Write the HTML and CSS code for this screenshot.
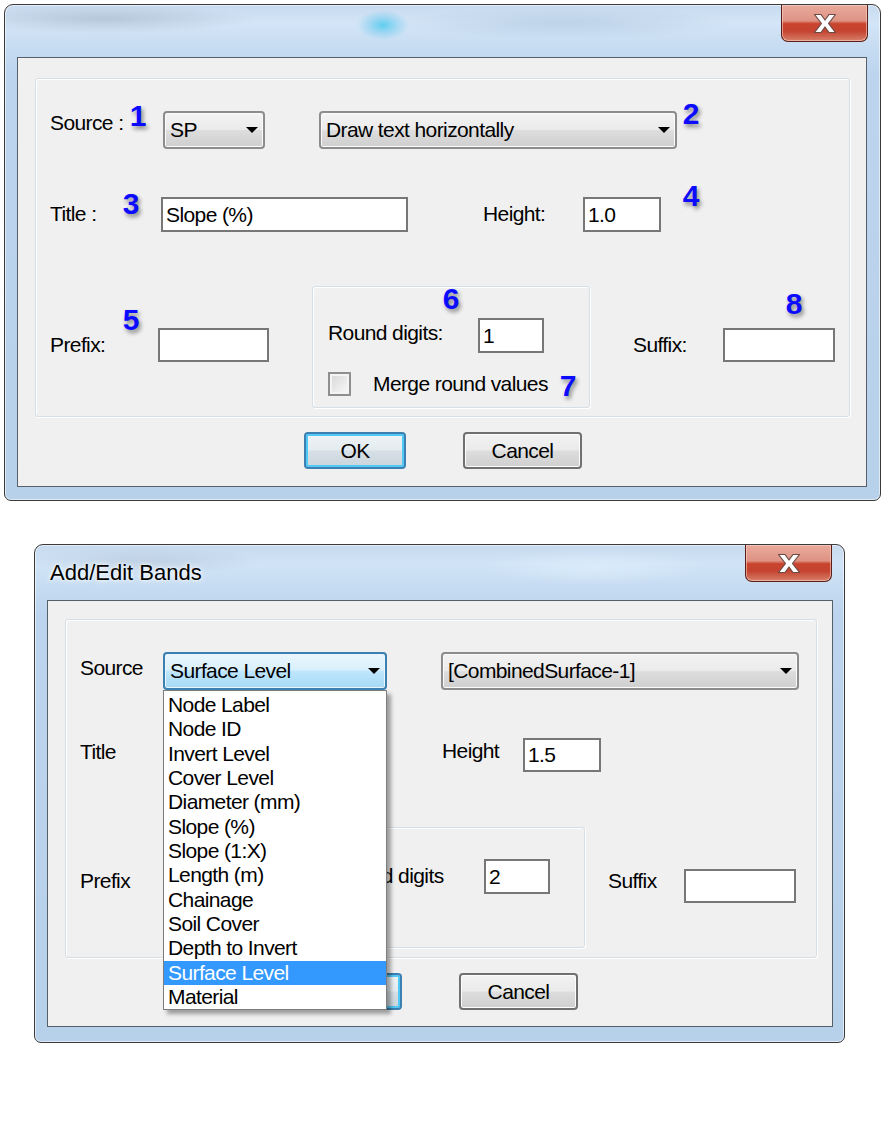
FILE: index.html
```html
<!DOCTYPE html>
<html>
<head>
<meta charset="utf-8">
<title>Band dialogs</title>
<link rel="stylesheet" href="styles.css">
</head>
<body>

<div class="window win-a">
  <div class="titlebar">
    <span class="title"></span>
    <div class="close">
      <svg width="24" height="21" viewBox="0 0 24 21"><polygon points="1.5,1.5 8,1.5 12,7 16,1.5 22.5,1.5 15.5,10.5 22.5,19.5 16,19.5 12,14 8,19.5 1.5,19.5 8.5,10.5" fill="#ffffff" stroke="#6b4a45" stroke-width="1.2" stroke-linejoin="round"/></svg>
    </div>
  </div>
  <div class="client client-a">
    <div class="group group-a">
      <div class="row r1">
        <span class="lbl a-src">Source :</span>
        <div class="combo c-sp"><span>SP</span><i class="arrow"></i></div>
        <div class="combo c-draw"><span>Draw text horizontally</span><i class="arrow"></i></div>
      </div>
      <div class="row r2">
        <span class="lbl a-title">Title :</span>
        <div class="input a-i-title">Slope (%)</div>
        <span class="lbl a-height">Height:</span>
        <div class="input a-i-height">1.0</div>
      </div>
      <div class="row r3">
        <div class="field f-prefix">
          <span class="lbl a-prefix">Prefix:</span>
          <div class="input i-prefix"></div>
        </div>
        <div class="subgroup sub-a">
          <div class="sub-row">
            <span class="lbl a-round">Round digits:</span>
            <div class="input i-round">1</div>
          </div>
          <div class="sub-row check-row">
            <span class="checkbox"></span>
            <span class="lbl a-merge">Merge round values</span>
          </div>
        </div>
        <div class="field f-suffix-a">
          <span class="lbl a-suffix">Suffix:</span>
          <div class="input i-suffix"></div>
        </div>
      </div>

      <span class="badge b1">1</span>
      <span class="badge b2">2</span>
      <span class="badge b3">3</span>
      <span class="badge b4">4</span>
      <span class="badge b5">5</span>
      <span class="badge b6">6</span>
      <span class="badge b7">7</span>
      <span class="badge b8">8</span>
    </div>
    <div class="buttons">
      <div class="btn btn-ok a-ok">OK</div>
      <div class="btn btn-cancel">Cancel</div>
    </div>
  </div>
</div>

<div class="window win-b">
  <div class="titlebar">
    <span class="title">Add/Edit Bands</span>
    <div class="close">
      <svg width="24" height="21" viewBox="0 0 24 21"><polygon points="1.5,1.5 8,1.5 12,7 16,1.5 22.5,1.5 15.5,10.5 22.5,19.5 16,19.5 12,14 8,19.5 1.5,19.5 8.5,10.5" fill="#ffffff" stroke="#6b4a45" stroke-width="1.2" stroke-linejoin="round"/></svg>
    </div>
  </div>
  <div class="client client-b">
    <div class="group group-b">
      <div class="row r1">
        <span class="lbl b-src">Source</span>
        <div class="combo combo-focus c-src">
          <span>Surface Level</span><i class="arrow"></i>
          <div class="listbox">
            <div class="opt">Node Label</div>
            <div class="opt">Node ID</div>
            <div class="opt">Invert Level</div>
            <div class="opt">Cover Level</div>
            <div class="opt">Diameter (mm)</div>
            <div class="opt">Slope (%)</div>
            <div class="opt">Slope (1:X)</div>
            <div class="opt">Length (m)</div>
            <div class="opt">Chainage</div>
            <div class="opt">Soil Cover</div>
            <div class="opt">Depth to Invert</div>
            <div class="opt sel">Surface Level</div>
            <div class="opt">Material</div>
          </div>
        </div>
        <div class="combo c-comb"><span>[CombinedSurface-1]</span><i class="arrow"></i></div>
      </div>
      <div class="row r2-b">
        <span class="lbl b-title">Title</span>
        <div class="input b-i-title"></div>
        <span class="lbl b-height">Height</span>
        <div class="input b-i-height">1.5</div>
      </div>
      <div class="row r3-b">
        <div class="field f-prefix">
          <span class="lbl b-prefix">Prefix</span>
          <div class="input i-prefix"></div>
        </div>
        <div class="subgroup sub-b">
          <div class="sub-row">
            <span class="lbl b-round">Round digits</span>
            <div class="input i-round">2</div>
          </div>
        </div>
        <div class="field f-suffix-b">
          <span class="lbl b-suffix">Suffix</span>
          <div class="input i-suffix"></div>
        </div>
      </div>
    </div>
    <div class="buttons">
      <div class="btn btn-ok b-ok">OK</div>
      <div class="btn btn-cancel">Cancel</div>
    </div>
  </div>
</div>

</body>
</html>
```

FILE: styles.css
```css
* { box-sizing: border-box; }

html, body {
  margin: 0;
  padding: 0;
  background: #ffffff;
}

body {
  width: 886px;
  height: 1123px;
  overflow: hidden;
  display: flex;
  flex-direction: column;
  align-items: flex-start;
  font-family: "Liberation Sans", Arial, sans-serif;
  font-size: 21px;
  letter-spacing: -0.6px;
  color: #000;
}

/* ---------- window frame ---------- */
.window {
  flex: none;
  display: flex;
  flex-direction: column;
  border: 1px solid #3a3a3a;
  border-radius: 9px 9px 7px 7px;
  box-shadow: inset 0 0 0 1px rgba(255, 255, 255, 0.55);
}

.win-a {
  margin: 4px 0 0 4px;
  width: 877px;
  height: 497px;
  background:
    radial-gradient(ellipse 26px 15px at 378px 20px, rgba(90, 205, 240, 0.95) 0%, rgba(120, 205, 240, 0.5) 55%, rgba(120, 205, 240, 0) 100%),
    radial-gradient(ellipse 150px 14px at 100px 14px, rgba(150, 166, 184, 0.45), rgba(150, 166, 184, 0)),
    radial-gradient(ellipse 170px 16px at 560px 18px, rgba(150, 176, 205, 0.35), rgba(150, 176, 205, 0)),
    linear-gradient(180deg, #c8daee 0px, #d3e5f7 18px, #c5dbf1 45px, #bcd4ee 70px, #b8d1eb 100%);
}

.win-b {
  margin: 43px 0 0 34px;
  width: 811px;
  height: 499px;
  background:
    radial-gradient(ellipse 120px 14px at 110px 16px, rgba(160, 176, 194, 0.35), rgba(160, 176, 194, 0)),
    radial-gradient(ellipse 110px 18px at 560px 22px, rgba(220, 238, 252, 0.8), rgba(220, 238, 252, 0)),
    linear-gradient(180deg, #c6d9ee 0px, #d1e4f7 18px, #c5dbf1 45px, #bcd4ee 70px, #b8d1eb 100%);
}

.titlebar {
  flex: none;
  display: flex;
  justify-content: space-between;
  align-items: flex-start;
}

.win-a .titlebar { height: 52px; }
.win-b .titlebar { height: 55px; }

.title {
  font-size: 22px;
  letter-spacing: 0;
  line-height: 26px;
  padding: 15px 0 0 15px;
  color: #000;
  text-shadow: 0 0 6px rgba(255, 255, 255, 0.95), 0 0 3px #fff;
}

.close {
  flex: none;
  width: 87px;
  height: 37px;
  margin-right: 12px;
  border: 1px solid #5a1f16;
  border-top: none;
  border-radius: 0 0 7px 7px;
  background: linear-gradient(180deg, #e9aa9c 0%, #de9384 44%, #c9442e 52%, #c4432f 72%, #d7806b 100%);
  box-shadow: inset 0 0 0 1px rgba(255, 215, 205, 0.55);
  display: flex;
  align-items: center;
  justify-content: center;
}

.close svg { display: block; }

/* ---------- client area ---------- */
.client {
  flex: none;
  display: flex;
  flex-direction: column;
  background: #f0f0f0;
  border: 1px solid #56606b;
  margin-left: 12px;
}

.client-a { width: 850px; height: 430px; }
.client-b { width: 786px; height: 427px; }

.group {
  position: relative;
  flex: none;
  border: 1px solid #d5dfe5;
  border-radius: 3px;
  box-shadow: inset 1px 1px 0 #ffffff, 1px 1px 0 #ffffff;
}

.group-a { margin: 20px 0 0 17px; width: 815px; height: 339px; }
.group-b { margin: 18px 0 0 17px; width: 752px; height: 339px; }

.row {
  flex: none;
  display: flex;
  align-items: flex-start;
}

.lbl {
  flex: none;
  line-height: 24px;
  white-space: nowrap;
}

/* ---------- controls ---------- */
.combo {
  position: relative;
  flex: none;
  height: 38px;
  border: 2px solid #8c8c8c;
  border-radius: 4px;
  box-shadow: inset 0 0 0 1px #fbfbfb;
  background: linear-gradient(180deg, #f3f3f3 0%, #ebebeb 48%, #dddddd 52%, #cfcfcf 100%);
  display: flex;
  align-items: center;
  justify-content: space-between;
  padding: 0 5px;
  line-height: 24px;
  white-space: nowrap;
}

.combo-focus {
  border-color: #3c7fb1;
  box-shadow: inset 0 0 0 1px #e8f5fc;
  background: linear-gradient(180deg, #eaf6fd 0%, #d9f0fc 46%, #bee6fd 52%, #a7d9f5 100%);
}

.arrow {
  flex: none;
  width: 0;
  height: 0;
  border-left: 6.5px solid transparent;
  border-right: 6.5px solid transparent;
  border-top: 6px solid #000;
}

.input {
  flex: none;
  background: #ffffff;
  border: 2px solid #777777;
  padding: 0 3px;
  display: flex;
  align-items: center;
  line-height: 24px;
  white-space: nowrap;
}

.checkbox {
  flex: none;
  width: 23px;
  height: 24px;
  border: 2px solid #8e8f8f;
  background: linear-gradient(135deg, #d6d6d6 0%, #e8e8e8 50%, #fafafa 100%);
  box-shadow: inset 0 0 0 2px #f4f4f4;
}

.btn {
  flex: none;
  height: 37px;
  border: 2px solid #707070;
  border-radius: 4px;
  box-shadow: inset 0 0 0 1px #fcfcfc;
  background: linear-gradient(180deg, #f2f2f2 0%, #ebebeb 48%, #dddddd 52%, #cfcfcf 100%);
  display: flex;
  align-items: center;
  justify-content: center;
  line-height: 24px;
}

.btn-ok {
  width: 102px;
  border-color: #3c7fb1;
  box-shadow: inset 0 0 0 2px #52c8f5;
  background: linear-gradient(180deg, #eef3f6 0%, #e4ecf0 48%, #d6dfe5 52%, #cad5dc 100%);
}

.btn-cancel {
  width: 119px;
  margin-left: 57px;
}

.buttons {
  flex: none;
  display: flex;
  margin-top: 15px;
}

.a-ok { margin-left: 286px; }
.b-ok { margin-left: 252px; }

/* ---------- badges (annotation callouts) ---------- */
.badge {
  position: absolute;
  width: 20px;
  text-align: center;
  font: bold 30px/30px "Liberation Sans", Arial, sans-serif;
  letter-spacing: 0;
  color: #0b0bff;
  text-shadow: 2px 3px 4px rgba(0, 0, 0, 0.45);
}

.b1 { left: 92px;  top: 22px; }
.b2 { left: 645px; top: 20px; }
.b3 { left: 85px;  top: 110px; }
.b4 { left: 645px; top: 102px; }
.b5 { left: 85px;  top: 226px; }
.b6 { left: 405px; top: 205px; }
.b7 { left: 522px; top: 292px; }
.b8 { left: 748px; top: 210px; }

/* ---------- top dialog rows ---------- */
.r1 { margin-top: 32px; height: 38px; }
.a-src { margin-left: 14px; width: 113px; }
.c-sp { width: 102px; }
.c-draw { margin-left: 54px; width: 358px; }

.r2 { margin-top: 48px; height: 35px; }
.a-title { margin-left: 14px; width: 111px; margin-top: 5px; }
.a-i-title { width: 247px; height: 35px; }
.a-height { margin-left: 75px; width: 100px; margin-top: 5px; }
.a-i-height { width: 78px; height: 35px; }

.r3 { margin-top: 54px; height: 122px; }

.field {
  flex: none;
  display: flex;
  align-items: center;
  margin-top: 42px;
}

.a-prefix { margin-left: 14px; width: 108px; }
.i-prefix { width: 111px; height: 34px; }
.i-suffix { width: 112px; height: 34px; }

.subgroup {
  flex: none;
  display: flex;
  flex-direction: column;
  border: 1px solid #d5dfe5;
  border-radius: 3px;
  box-shadow: inset 1px 1px 0 #ffffff, 1px 1px 0 #ffffff;
}

.sub-a { margin-left: 43px; width: 278px; height: 122px; }

.sub-row {
  flex: none;
  display: flex;
  align-items: center;
  margin-top: 31px;
}

.a-round { margin-left: 15px; width: 150px; margin-bottom: 6px; }
.i-round { width: 66px; height: 35px; }

.check-row { margin-top: 19px; }
.check-row .checkbox { margin-left: 15px; }
.a-merge { margin-left: 22px; }

.f-suffix-a { margin-left: 43px; }
.a-suffix { width: 90px; }

/* ---------- bottom dialog rows ---------- */
.b-src { margin-left: 14px; width: 83px; margin-top: 4px; }
.c-src { width: 224px; padding-left: 5px; }
.c-comb { margin-left: 54px; width: 358px; }

.listbox {
  position: absolute;
  left: -2px;
  top: calc(100% + 2px);
  width: 224px;
  display: flex;
  flex-direction: column;
  background: #ffffff;
  border: 1px solid #7d7d7d;
  padding-top: 2px;
  box-shadow: 4px 4px 4px rgba(0, 0, 0, 0.35);
}

.opt {
  flex: none;
  height: 24.33px;
  line-height: 24.33px;
  padding-left: 4px;
  white-space: nowrap;
  color: #000;
}

.opt.sel {
  background: #3399ff;
  color: #ffffff;
}

.r2-b { margin-top: 48px; height: 34px; }
.b-title { margin-left: 14px; width: 110px; margin-top: 2px; }
.b-i-title { width: 190px; height: 34px; }
.b-height { margin-left: 62px; width: 81px; margin-top: 1px; }
.b-i-height { width: 78px; height: 34px; }

.r3-b { margin-top: 55px; height: 121px; }
.b-prefix { margin-left: 14px; width: 108px; margin-bottom: 10px; }
.sub-b { margin-left: 19px; width: 267px; height: 121px; }
.b-round { margin-left: 15px; width: 150px; margin-bottom: 2px; }
.f-suffix-b { margin-left: 23px; }
.b-suffix { width: 76px; margin-bottom: 10px; }
```
